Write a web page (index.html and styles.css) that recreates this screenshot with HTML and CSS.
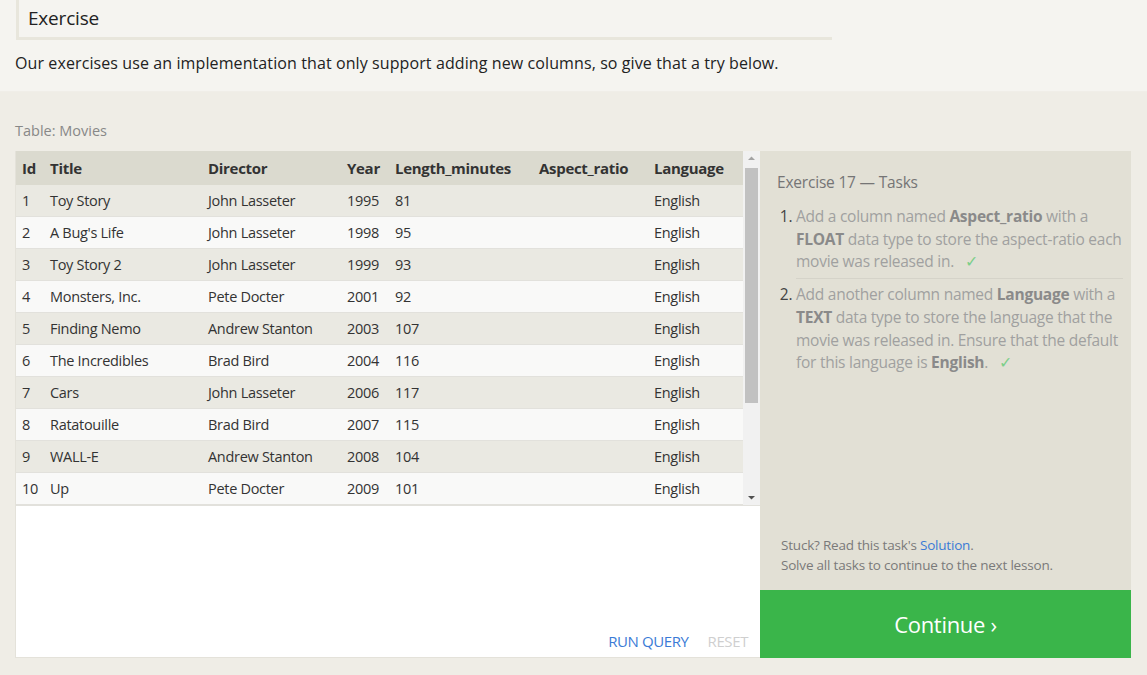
FILE: index.html
```html
<!DOCTYPE html>
<html>
<head>
<meta charset="utf-8">
<link rel="stylesheet" href="styles.css">
</head>
<body>
<div class="top">
  <div class="heading">Exercise</div>
  <p class="intro">Our exercises use an implementation that only support adding new columns, so give that a try below.</p>
</div>
<div class="lower">
  <div class="caption">Table: Movies</div>
  <div class="workspace">
    <div class="left">
      <div class="tablewrap">
        <div class="grid">
          <div class="row head">
            <div class="c c1">Id</div><div class="c c2">Title</div><div class="c c3">Director</div><div class="c c4">Year</div><div class="c c5">Length_minutes</div><div class="c c6">Aspect_ratio</div><div class="c c7">Language</div>
          </div>
          <div class="row odd"><div class="c c1">1</div><div class="c c2">Toy Story</div><div class="c c3">John Lasseter</div><div class="c c4">1995</div><div class="c c5">81</div><div class="c c6"></div><div class="c c7">English</div></div>
          <div class="row even"><div class="c c1">2</div><div class="c c2">A Bug's Life</div><div class="c c3">John Lasseter</div><div class="c c4">1998</div><div class="c c5">95</div><div class="c c6"></div><div class="c c7">English</div></div>
          <div class="row odd"><div class="c c1">3</div><div class="c c2">Toy Story 2</div><div class="c c3">John Lasseter</div><div class="c c4">1999</div><div class="c c5">93</div><div class="c c6"></div><div class="c c7">English</div></div>
          <div class="row even"><div class="c c1">4</div><div class="c c2">Monsters, Inc.</div><div class="c c3">Pete Docter</div><div class="c c4">2001</div><div class="c c5">92</div><div class="c c6"></div><div class="c c7">English</div></div>
          <div class="row odd"><div class="c c1">5</div><div class="c c2">Finding Nemo</div><div class="c c3">Andrew Stanton</div><div class="c c4">2003</div><div class="c c5">107</div><div class="c c6"></div><div class="c c7">English</div></div>
          <div class="row even"><div class="c c1">6</div><div class="c c2">The Incredibles</div><div class="c c3">Brad Bird</div><div class="c c4">2004</div><div class="c c5">116</div><div class="c c6"></div><div class="c c7">English</div></div>
          <div class="row odd"><div class="c c1">7</div><div class="c c2">Cars</div><div class="c c3">John Lasseter</div><div class="c c4">2006</div><div class="c c5">117</div><div class="c c6"></div><div class="c c7">English</div></div>
          <div class="row even"><div class="c c1">8</div><div class="c c2">Ratatouille</div><div class="c c3">Brad Bird</div><div class="c c4">2007</div><div class="c c5">115</div><div class="c c6"></div><div class="c c7">English</div></div>
          <div class="row odd"><div class="c c1">9</div><div class="c c2">WALL-E</div><div class="c c3">Andrew Stanton</div><div class="c c4">2008</div><div class="c c5">104</div><div class="c c6"></div><div class="c c7">English</div></div>
          <div class="row even last"><div class="c c1">10</div><div class="c c2">Up</div><div class="c c3">Pete Docter</div><div class="c c4">2009</div><div class="c c5">101</div><div class="c c6"></div><div class="c c7">English</div></div>
        </div>
        <div class="scrollbar">
          <svg class="arrow" width="17" height="14" viewBox="0 0 17 14"><polygon points="5,9 12,9 8.5,5.5" fill="#a3a3a3"/></svg>
          <div class="track"><div class="thumb"></div></div>
          <svg class="arrow" width="17" height="14" viewBox="0 0 17 14"><polygon points="5,5 12,5 8.5,8.5" fill="#505050"/></svg>
        </div>
      </div>
      <div class="editor">
        <div class="actions">
          <span class="run">RUN QUERY</span>
          <span class="reset">RESET</span>
        </div>
      </div>
    </div>
    <div class="panel">
      <div class="tasks">
        <div class="tasks-title">Exercise 17 — Tasks</div>
        <ol class="list">
          <li class="task">Add a column named <b>Aspect_ratio</b> with a <b>FLOAT</b> data type to store the aspect-ratio each movie was released in. <span class="check">✓</span></li>
          <li class="task">Add another column named <b>Language</b> with a <b>TEXT</b> data type to store the language that the movie was released in. Ensure that the default for this language is <b>English</b>. <span class="check">✓</span></li>
        </ol>
      </div>
      <div class="help">
        <div>Stuck? Read this task's <span class="link">Solution</span>.</div>
        <div>Solve all tasks to continue to the next lesson.</div>
      </div>
      <div class="continue">Continue ›</div>
    </div>
  </div>
</div>
</body>
</html>
```

FILE: styles.css
```css
html, body {
  margin: 0;
  padding: 0;
}
body {
  font-family: "Open Sans", "Noto Sans", sans-serif;
  color: #333;
  background: #efede6;
  width: 1147px;
  height: 675px;
  overflow: hidden;
}
.top {
  background: #f5f4f0;
  height: 92px;
  padding: 0 15px;
  box-sizing: border-box;
  border-bottom: 1px solid #f0eee8;
}
.heading {
  margin-left: 1px;
  width: 804px;
  height: 37px;
  border-left: 3px solid #e8e6dc;
  border-bottom: 3px solid #e8e6dc;
  padding-left: 9px;
  font-size: 19px;
  line-height: 37px;
  color: #222;
  letter-spacing: -0.2px;
}
.intro {
  margin: 12px 0 0 0;
  font-size: 16px;
  line-height: 22px;
  color: #222;
  letter-spacing: 0.1px;
}
.lower {
  padding: 29px 15px 0 15px;
}
.caption {
  font-size: 14.5px;
  color: #888;
  line-height: 20px;
  letter-spacing: 0;
}
.workspace {
  margin-top: 10px;
  display: flex;
  width: 1116px;
  height: 507px;
}
.left {
  width: 745px;
  background: #fff;
  border-left: 1px solid #e4e2da;
  border-bottom: 1px solid #e4e2da;
  box-sizing: border-box;
  display: flex;
  flex-direction: column;
}
.tablewrap {
  display: flex;
  height: 354px;
}
.grid {
  width: 727px;
  font-size: 14.5px;
  letter-spacing: -0.3px;
}
.row {
  display: flex;
  height: 32px;
  align-items: center;
  border-bottom: 1px solid #e2e1dc;
  box-sizing: border-box;
}
.row.head {
  height: 34px;
  background: #dbdacf;
  font-weight: 700;
  font-size: 15px;
  border-bottom: none;
  color: #333;
}
.row.odd { background: #eae9e2; }
.row.even { background: #f9f9f8; }
.c {
  padding-left: 6px;
  box-sizing: border-box;
  white-space: nowrap;
}
.c1 { width: 28px; }
.c2 { width: 158px; }
.c3 { width: 139px; }
.c4 { width: 48px; }
.c5 { width: 144px; }
.c6 { width: 115px; }
.c7 { width: 95px; }
.scrollbar {
  width: 17px;
  background: #f1f1f1;
  display: flex;
  flex-direction: column;
}
.arrow {
  display: block;
  flex: none;
}
.track {
  flex: 1;
  padding: 3px 2px 0 2px;
}
.thumb {
  height: 235px;
  background: #c1c1c1;
}
.editor {
  flex: 1;
  display: flex;
  flex-direction: column;
  justify-content: flex-end;
  border-top: 1px solid #e2e1dc;
}
.actions {
  display: flex;
  justify-content: flex-end;
  gap: 19px;
  padding: 0 12px 6px 0;
  font-size: 15px;
  letter-spacing: -0.4px;
}
.run { color: #3b7bd6; }
.reset { color: #cfcfcf; }
.panel {
  width: 371px;
  background: #e2e0d5;
  display: flex;
  flex-direction: column;
}
.tasks {
  flex: 1;
  padding: 20px 2px 0 17px;
}
.tasks-title {
  font-size: 15.5px;
  color: #757575;
  line-height: 22px;
  letter-spacing: -0.2px;
}
.list {
  margin: 12px 0 0 0;
  padding-left: 19px;
  font-size: 15.5px;
  line-height: 22.7px;
  color: #a0a0a0;
  letter-spacing: -0.25px;
}
.list li::marker {
  color: #444;
}
.task {
  padding: 0 0 5px 0;
  margin-right: 6px;
}
.task + .task {
  border-top: 1px solid #d5d3c9;
  padding-top: 4px;
}
.task b {
  color: #8a8a8a;
}
.check {
  color: #7dcf8a;
  margin-left: 7px;
}
.help {
  padding: 0 0 15px 21px;
  font-size: 13.5px;
  line-height: 20px;
  color: #7a7a7a;
  letter-spacing: -0.2px;
}
.link { color: #3b7bd6; }
.continue {
  height: 68px;
  background: #3ab54a;
  color: #fff;
  font-size: 22px;
  display: flex;
  align-items: center;
  justify-content: center;
  letter-spacing: -0.3px;
}
```
